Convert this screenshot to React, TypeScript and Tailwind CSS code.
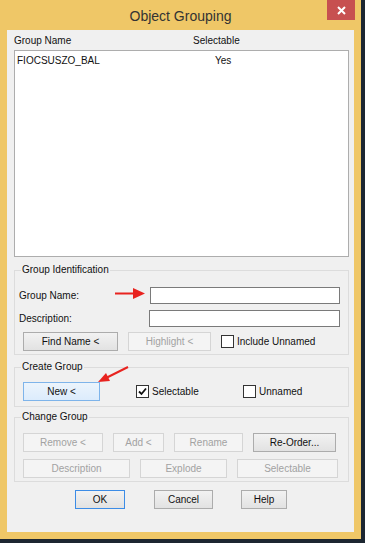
import React from "react";

type BtnKind = "normal" | "disabled" | "hot" | "default";

function Btn({ label, w, kind = "normal" }: { label: string; w: string; kind?: BtnKind }) {
  const base = "h-[19px] flex items-center justify-center text-[10px] leading-none border shrink-0";
  const cls =
    kind === "disabled"
      ? "border-[#d5d5d5] bg-[#f4f4f4] text-[#a2a2a2]"
      : kind === "hot"
      ? "border-[#7eb4ea] bg-gradient-to-b from-[#ecf4fc] to-[#dcecfc] text-[#111]"
      : kind === "default"
      ? "border-[#3c8ce6] bg-gradient-to-b from-[#f2f2f2] to-[#e2e2e2] text-[#111]"
      : "border-[#acacac] bg-gradient-to-b from-[#f2f2f2] to-[#e2e2e2] text-[#111]";
  return <div className={`${base} ${cls} ${w}`}>{label}</div>;
}

function Check({ checked }: { checked?: boolean }) {
  return (
    <div className="w-[13px] h-[13px] border border-[#333] bg-white flex items-center justify-center shrink-0">
      {checked && (
        <svg width="11" height="11" viewBox="0 0 11 11">
          <path d="M2 5.5 L4.5 8 L9 2.5" fill="none" stroke="#111" strokeWidth="1.8" />
        </svg>
      )}
    </div>
  );
}

function Legend({ children }: { children: React.ReactNode }) {
  return <legend className="ml-[6px] px-[1px] text-[10px] leading-[16px] text-[#111]">{children}</legend>;
}

export default function App() {
  return (
    <div className="w-[365px] h-[543px] bg-[#1c2631] overflow-hidden font-['Liberation_Sans',Arial,sans-serif]">
      <div className="w-[361px] h-[539px] bg-[#efc767] flex flex-col">
        {/* title bar */}
        <div className="h-[30px] relative flex items-center justify-center shrink-0">
          <span className="text-[14px] text-[#333] mt-[2px]">Object Grouping</span>
          <div className="absolute right-[6px] top-0 w-[28px] h-[20px] bg-[#c75050] flex items-center justify-center">
            <svg width="9" height="9" viewBox="0 0 9 9">
              <path d="M1 1 L8 8 M8 1 L1 8" stroke="#fff" strokeWidth="2" />
            </svg>
          </div>
        </div>
        {/* content */}
        <div className="relative ml-[7px] w-[347px] h-[502px] bg-[#f0f0f0] flex flex-col items-start pl-[7px] text-[#111]">
          {/* list header */}
          <div className="h-[20px] w-[335px] flex items-center text-[10px]">
            <span className="w-[179px]">Group Name</span>
            <span>Selectable</span>
          </div>
          {/* list box */}
          <div className="w-[335px] h-[207px] bg-white border border-[#adadad]">
            <div className="h-[14px] mt-[2px] flex items-center text-[10px] pl-[2px]">
              <span className="w-[198px]">FIOCSUSZO_BAL</span>
              <span>Yes</span>
            </div>
          </div>

          {/* Group Identification */}
          <fieldset className="mt-[5px] w-[335px] h-[93px] border border-[#dcdcdc]">
            <Legend>Group Identification</Legend>
            <div className="mt-[9px] flex items-center pl-[4px] text-[10px]">
              <span className="w-[131px]">Group Name:</span>
              <div className="w-[190px] h-[17px] bg-white border border-[#7a7a7a]" />
            </div>
            <div className="mt-[6px] flex items-center pl-[4px] text-[10px]">
              <span className="w-[130px]">Description:</span>
              <div className="w-[191px] h-[17px] bg-white border border-[#7a7a7a]" />
            </div>
            <div className="mt-[5px] flex items-center pl-[8px] gap-[10px] text-[10px]">
              <Btn label="Find Name <" w="w-[95px]" />
              <Btn label="Highlight <" w="w-[83px]" kind="disabled" />
              <div className="flex items-center gap-[3px]">
                <Check />
                <span>Include Unnamed</span>
              </div>
            </div>
          </fieldset>

          {/* Create Group */}
          <fieldset className="mt-[4px] w-[335px] h-[48px] border border-[#dcdcdc]">
            <Legend>Create Group</Legend>
            <div className="mt-[7px] flex items-center pl-[8px] text-[10px]">
              <Btn label="New <" w="w-[77px]" kind="hot" />
              <div className="ml-[36px] w-[107px] flex items-center gap-[3px]">
                <Check checked />
                <span>Selectable</span>
              </div>
              <div className="flex items-center gap-[3px]">
                <Check />
                <span>Unnamed</span>
              </div>
            </div>
          </fieldset>

          {/* Change Group */}
          <fieldset className="mt-[2px] w-[335px] h-[73px] border border-[#dcdcdc]">
            <Legend>Change Group</Legend>
            <div className="mt-[8px] flex items-center pl-[8px] gap-[10px]">
              <Btn label="Remove <" w="w-[80px]" kind="disabled" />
              <Btn label="Add <" w="w-[51px]" kind="disabled" />
              <Btn label="Rename" w="w-[69px]" kind="disabled" />
              <Btn label="Re-Order..." w="w-[83px]" />
            </div>
            <div className="mt-[7px] flex items-center pl-[8px] gap-[10px]">
              <Btn label="Description" w="w-[107px]" kind="disabled" />
              <Btn label="Explode" w="w-[87px]" kind="disabled" />
              <Btn label="Selectable" w="w-[101px]" kind="disabled" />
            </div>
          </fieldset>

          {/* dialog buttons */}
          <div className="mt-[8px] flex items-center pl-[61px]">
            <Btn label="OK" w="w-[50px]" kind="default" />
            <div className="ml-[29px]">
              <Btn label="Cancel" w="w-[59px]" />
            </div>
            <div className="ml-[28px]">
              <Btn label="Help" w="w-[46px]" />
            </div>
          </div>

          {/* red annotation arrows */}
          <svg className="absolute inset-0 pointer-events-none" width="347" height="502" viewBox="0 0 347 502">
            <line x1="108" y1="263.5" x2="128" y2="263.5" stroke="#e8231f" strokeWidth="2" />
            <polygon points="126,258 138,263.5 126,269" fill="#e8231f" />
            <line x1="121" y1="337" x2="99" y2="348" stroke="#e8231f" strokeWidth="2" />
            <polygon points="91,352 99,343 103,351" fill="#e8231f" />
          </svg>
        </div>
      </div>
    </div>
  );
}
